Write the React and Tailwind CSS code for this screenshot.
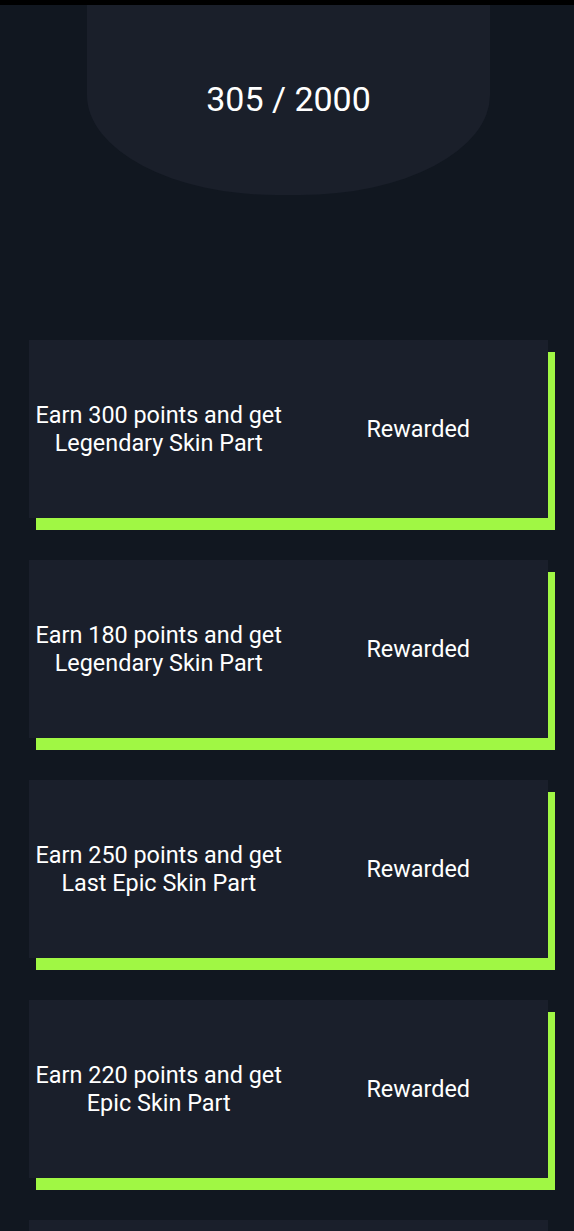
const rewards = [
    {points: 300, prize: "Legendary Skin Part"},
    {points: 180, prize: "Legendary Skin Part"},
    {points: 250, prize: "Last Epic Skin Part"},
    {points: 220, prize: "Epic Skin Part"},
    {points: 150, prize: "Rare Skin Part"},
];

function RewardCard({points, prize}) {
    return (
        <div className="h-[178px] bg-[#1a1f2b] shadow-[7px_12px_0_#a0f744] grid grid-cols-2 items-center text-white text-[23.4px] leading-[28px] text-center">
            <p className="whitespace-nowrap">Earn {points} points and get<br/>{prize}</p>
            <p>Rewarded</p>
        </div>
    );
}

export default function App() {
    return (
        <div className="min-h-screen bg-[#111720] font-['Roboto','Liberation_Sans',sans-serif]">
            <div className="h-[5px] bg-black"/>
            <div className="ml-[87px] mr-[84px] h-[190px] bg-[#1a1f2a] rounded-b-[190px_100px] flex items-center justify-center pb-[1px]">
                <span className="text-white text-[34px]">305 / 2000</span>
            </div>
            <div className="mt-[145px] pl-[29px] pr-[26px] flex flex-col gap-[42px]">
                {rewards.map((r, i) => <RewardCard key={i} {...r}/>)}
            </div>
        </div>
    );
}
